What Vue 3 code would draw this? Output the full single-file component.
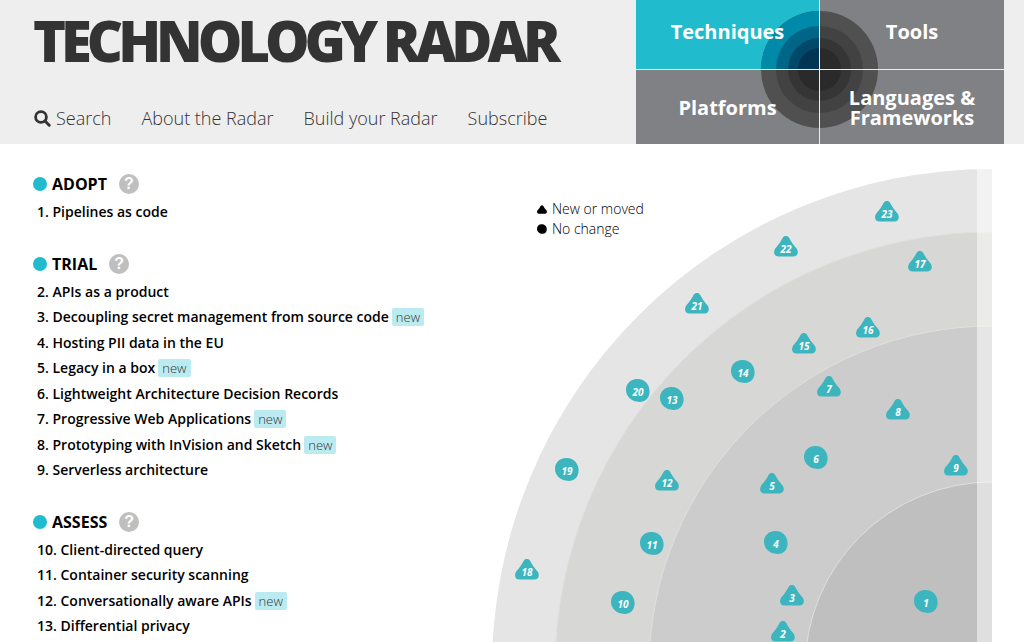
<script setup>
const navLinks = ['About the Radar', 'Build your Radar', 'Subscribe']

const sections = [
  { name: 'Adopt', items: [{ n: 1, label: 'Pipelines as code' }] },
  {
    name: 'Trial',
    items: [
      { n: 2, label: 'APIs as a product' },
      { n: 3, label: 'Decoupling secret management from source code', fresh: true },
      { n: 4, label: 'Hosting PII data in the EU' },
      { n: 5, label: 'Legacy in a box', fresh: true },
      { n: 6, label: 'Lightweight Architecture Decision Records' },
      { n: 7, label: 'Progressive Web Applications', fresh: true },
      { n: 8, label: 'Prototyping with InVision and Sketch', fresh: true },
      { n: 9, label: 'Serverless architecture' },
    ],
  },
  {
    name: 'Assess',
    items: [
      { n: 10, label: 'Client-directed query' },
      { n: 11, label: 'Container security scanning' },
      { n: 12, label: 'Conversationally aware APIs', fresh: true },
      { n: 13, label: 'Differential privacy' },
    ],
  },
]

// Radii are measured from the radar's centre, outermost ring first.
const rings = [
  { r: 500, fill: '#e5e5e5' },
  { r: 437, fill: '#d7d7d5' },
  { r: 343, fill: '#cccccc' },
  { r: 187, fill: '#bfbfbf' },
]

const triangle =
  'M8.6 1.9C10 -0.5 13.8 -0.5 15.2 1.9C17 5.4 19.4 8.8 22.4 12.2C25 15.4 24 20.5 19.5 20.5H4.3C-0.2 20.5 -1 15.4 1.4 12.2C4.4 8.8 6.8 5.4 8.6 1.9Z'
const circle =
  'M11 0C19 -0.3 23.6 6 23.6 12.2C23.7 18.5 19.8 22.9 13.5 22.9C5.5 22.9 0 17.6 0 10.8C0 4.6 4.5 0.2 11 0Z'

const blips = [
  { n: 1, x: 422, y: 421 },
  { n: 2, x: 279, y: 452, moved: true },
  { n: 3, x: 288, y: 416, moved: true },
  { n: 4, x: 272, y: 362 },
  { n: 5, x: 268, y: 304, moved: true },
  { n: 6, x: 312, y: 277 },
  { n: 7, x: 325, y: 207, moved: true },
  { n: 8, x: 394, y: 230, moved: true },
  { n: 9, x: 452, y: 286, moved: true },
  { n: 10, x: 119, y: 422 },
  { n: 11, x: 148, y: 363 },
  { n: 12, x: 163, y: 301, moved: true },
  { n: 13, x: 168, y: 218 },
  { n: 14, x: 239, y: 191 },
  { n: 15, x: 300, y: 164, moved: true },
  { n: 16, x: 364, y: 148, moved: true },
  { n: 17, x: 416, y: 82, moved: true },
  { n: 18, x: 23, y: 390, moved: true },
  { n: 19, x: 63, y: 289 },
  { n: 20, x: 134, y: 210 },
  { n: 21, x: 193, y: 124, moved: true },
  { n: 22, x: 282, y: 67, moved: true },
  { n: 23, x: 383, y: 32, moved: true },
]
</script>

<template>
  <div class="page">
    <header class="header">
      <div class="masthead">
        <h1 class="title">TECHNOLOGY RADAR</h1>
        <nav class="menu" aria-label="Main">
          <a href="#search" class="search">
            <svg width="17" height="17" viewBox="0 0 17 17" aria-hidden="true">
              <circle cx="7" cy="7" r="5.4" fill="none" stroke="#333" stroke-width="2.8" />
              <path d="M11 11L15.2 15.2" stroke="#333" stroke-width="3" stroke-linecap="round" />
            </svg>
            <span>Search</span>
          </a>
          <a v-for="link in navLinks" :key="link" href="#">{{ link }}</a>
        </nav>
      </div>
      <nav class="quadrants" aria-label="Quadrants">
        <svg class="target" width="119" height="119" viewBox="-59.5 -59.5 119 119" aria-hidden="true">
          <circle r="58.5" fill="#505050" />
          <circle r="43.5" fill="#424242" />
          <circle r="31.5" fill="#353535" />
          <circle r="21.5" fill="#2a2a2a" />
          <path d="M0 0H-58.5A58.5 58.5 0 0 1 0 -58.5Z" fill="#0089a8" />
          <path d="M0 0H-43.5A43.5 43.5 0 0 1 0 -43.5Z" fill="#006587" />
          <path d="M0 0H-31.5A31.5 31.5 0 0 1 0 -31.5Z" fill="#00496b" />
          <path d="M0 0H-21.5A21.5 21.5 0 0 1 0 -21.5Z" fill="#003454" />
        </svg>
        <a href="#techniques" class="active"><span>Techniques</span></a>
        <a href="#tools"><span>Tools</span></a>
        <a href="#platforms"><span>Platforms</span></a>
        <a href="#languages"><span>Languages &amp; Frameworks</span></a>
      </nav>
    </header>

    <main class="content">
      <div class="lists">
        <section v-for="section in sections" :key="section.name" class="section">
          <div class="heading">
            <i class="dot"></i>
            <h2>{{ section.name }}</h2>
            <button type="button" class="help">?</button>
          </div>
          <ul>
            <li v-for="item in section.items" :key="item.n">
              <a href="#">{{ item.n }}. {{ item.label }}</a>
              <span v-if="item.fresh" class="badge">new</span>
            </li>
          </ul>
        </section>
      </div>

      <div class="radar">
        <ul class="legend">
          <li>
            <svg width="10" height="9" viewBox="0 0 24 21" aria-hidden="true"><path :d="triangle" /></svg>
            New or moved
          </li>
          <li>
            <svg width="10" height="10" viewBox="0 0 24 23" aria-hidden="true"><path :d="circle" /></svg>
            No change
          </li>
        </ul>
        <svg class="chart" viewBox="0 0 500 473">
          <circle
            v-for="(ring, i) in rings"
            :key="ring.r"
            cx="500"
            cy="500"
            :r="ring.r"
            :fill="ring.fill"
            :stroke="i ? '#e0e0df' : 'none'"
          />
          <rect x="485" y="0" width="15" height="473" fill="#fff" fill-opacity="0.5" />
          <a v-for="blip in blips" :key="blip.n" href="#">
            <g :transform="`translate(${blip.x} ${blip.y})`">
              <path :d="blip.moved ? triangle : circle" fill="#3db5be" />
              <text x="12" y="17">{{ blip.n }}</text>
            </g>
          </a>
        </svg>
      </div>
    </main>
  </div>
</template>

<style>
body {
  background: #fff;
}
</style>

<style scoped>
.page {
  font-family: 'Open Sans', 'Noto Sans', sans-serif;
  color: #000;
}

a {
  color: inherit;
  text-decoration: none;
}

ul {
  list-style: none;
  margin: 0;
  padding: 0;
}

.header {
  display: flex;
  justify-content: space-between;
  height: 144px;
  padding: 0 20px 0 33px;
  background: #eee;
}

.masthead {
  display: flex;
  flex-direction: column;
  justify-content: space-between;
  padding: 8px 0 12px;
}

.title {
  margin: 0;
  font-size: 56px;
  font-weight: 800;
  line-height: 64px;
  letter-spacing: -5px;
  white-space: nowrap;
  color: #333;
}

.menu {
  display: flex;
  gap: 30px;
  font-size: 18px;
  font-weight: 300;
  line-height: 28px;
  white-space: nowrap;
  color: #333;
}

.search {
  display: flex;
  align-items: center;
  gap: 5px;
  padding-left: 1px;
}

.quadrants {
  position: relative;
  flex: 0 0 368px;
  display: grid;
  grid-template-columns: 183px 1fr;
  grid-template-rows: 69px 1fr;
  gap: 1px;
  background: #eee;
}

.quadrants a {
  display: flex;
  align-items: center;
  justify-content: center;
  padding: 2px 20px 0;
  background: #808184;
  color: #fff;
  font-size: 20px;
  font-weight: 700;
  line-height: 20px;
  text-align: center;
}

.quadrants a.active {
  background: #20bcce;
}

.quadrants a:nth-of-type(-n + 2) {
  padding: 0 20px 6px;
}

.quadrants span {
  position: relative;
  z-index: 2;
}

.target {
  position: absolute;
  left: 124px;
  top: 10px;
  z-index: 1;
}

.quadrants::before,
.quadrants::after {
  content: '';
  position: absolute;
  z-index: 1;
  background: #eee;
}

.quadrants::before {
  left: 0;
  right: 0;
  top: 69px;
  height: 1px;
  z-index: 2;
}

.quadrants::after {
  top: 0;
  bottom: 0;
  left: 183px;
  width: 1px;
}

.content {
  display: flex;
  padding: 0 32px 0 33px;
}

.lists {
  flex: 1;
  min-width: 0;
  padding-top: 27px;
}

.section + .section {
  margin-top: 27px;
}

.heading {
  display: flex;
  align-items: center;
  height: 26px;
  margin-bottom: 2px;
}

.dot {
  width: 14px;
  height: 14px;
  margin-right: 5px;
  border-radius: 50%;
  background: #20bcce;
}

h2 {
  margin: 0 12px 0 0;
  font-size: 16px;
  font-weight: 700;
  line-height: 26px;
  text-transform: uppercase;
}

.help {
  width: 20px;
  height: 20px;
  padding: 0;
  border: 0;
  border-radius: 50%;
  background: #bfbfbf;
  color: #fff;
  font: 700 16px/20px 'Liberation Sans', Arial, sans-serif;
}

.section li {
  padding-left: 4px;
  font-size: 14px;
  font-weight: 600;
  line-height: 25px;
  height: 25px;
  white-space: nowrap;
}

.section li:nth-child(even) {
  margin-bottom: 1px;
}

.badge {
  display: inline-block;
  margin-left: 3px;
  padding: 0 4px;
  border-radius: 2px;
  background: #bbebf0;
  color: #333;
  font-size: 13px;
  font-weight: 300;
  line-height: 18px;
}

.radar {
  position: relative;
  flex: 0 0 500px;
  padding-top: 25px;
}

.chart {
  display: block;
  width: 100%;
}

.chart text {
  fill: #fff;
  font-size: 10px;
  font-weight: 700;
  font-style: italic;
  text-anchor: middle;
}

.legend {
  position: absolute;
  left: 45px;
  top: 55px;
  font-size: 14px;
  font-weight: 300;
  line-height: 20px;
}

.legend li {
  display: flex;
  align-items: center;
  gap: 5px;
}
</style>
